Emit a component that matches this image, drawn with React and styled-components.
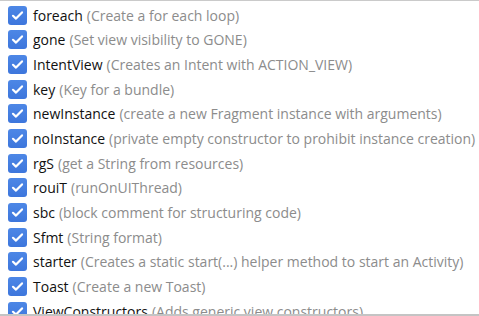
import React from "react";
import styled, { createGlobalStyle } from "styled-components";

const Global = createGlobalStyle`
  html, body { margin: 0; padding: 0; background: #fff; overflow: hidden; }
  body { font-family: "Open Sans", "Noto Sans", sans-serif; }
`;

const Panel = styled.div`
  width: 479px;
  height: 316px;
  box-sizing: border-box;
  border-top: 1px solid #cacaca;
  border-bottom: 2px solid #c4c4c4;
  overflow: hidden;
  background: #fff;
`;

const List = styled.ul`
  list-style: none;
  margin: 0;
  padding: 2px 0 0 0;
`;

const Row = styled.li`
  display: flex;
  align-items: center;
  height: 24.67px;
  padding-left: 8px;
  gap: 6px;
  white-space: nowrap;
  font-size: 14px;
`;

const Box = styled.span`
  flex: none;
  width: 19px;
  height: 19px;
  border-radius: 3px;
  background: linear-gradient(#4d87e6, #3d76dc);
  display: flex;
  align-items: center;
  justify-content: center;
`;

const Name = styled.span`
  color: #111;
`;

const Desc = styled.span`
  color: #8c8c8c;
  margin-left: 4px;
`;

const Check = () => (
  <Box>
    <svg width="19" height="19" viewBox="0 0 19 19">
      <path d="M5 9.8 L8 12.6 L14 6.4" fill="none" stroke="#fff" strokeWidth="2.2" strokeLinecap="round" strokeLinejoin="round" />
    </svg>
  </Box>
);

const items = [
  ["foreach", "Create a for each loop"],
  ["gone", "Set view visibility to GONE"],
  ["IntentView", "Creates an Intent with ACTION_VIEW"],
  ["key", "Key for a bundle"],
  ["newInstance", "create a new Fragment instance with arguments"],
  ["noInstance", "private empty constructor to prohibit instance creation"],
  ["rgS", "get a String from resources"],
  ["rouiT", "runOnUIThread"],
  ["sbc", "block comment for structuring code"],
  ["Sfmt", "String format"],
  ["starter", "Creates a static start(...) helper method to start an Activity"],
  ["Toast", "Create a new Toast"],
  ["ViewConstructors", "Adds generic view constructors"],
];

export default function App() {
  return (
    <>
      <Global />
      <Panel>
        <List>
          {items.map(([n, d]) => (
            <Row key={n}>
              <Check />
              <span>
                <Name>{n}</Name>
                <Desc>({d})</Desc>
              </span>
            </Row>
          ))}
        </List>
      </Panel>
    </>
  );
}
